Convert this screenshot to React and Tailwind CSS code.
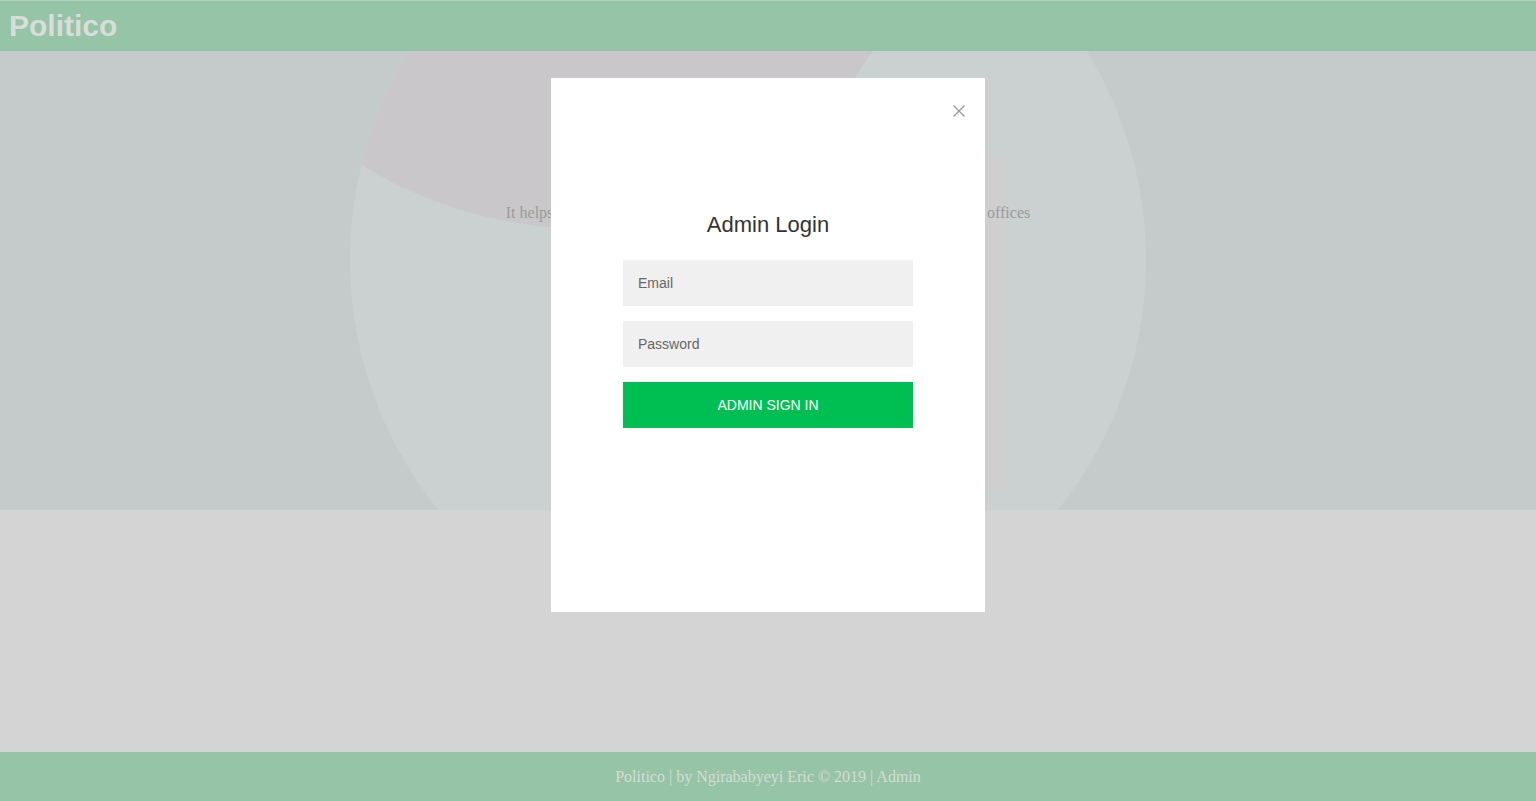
import React from "react";

export default function App() {
  return (
    <div className="relative h-[801px] w-full overflow-hidden bg-[#d4d4d4]">
      <div className="flex h-[801px] flex-col">
        <header className="flex h-[51px] items-center border-t border-[#b4cfbd] bg-[#95c4a6] px-[9px]">
          <h1 className="font-['Liberation_Sans',Arial,sans-serif] text-[30px] font-bold leading-none text-[#d9ddd9]">Politico</h1>
        </header>
        <section className="relative h-[459px] overflow-hidden bg-[#c5cbcb]">
          <svg className="absolute inset-0" width="1536" height="459" viewBox="0 51 1536 459">
            <defs>
              <clipPath id="circ">
                <circle cx="748" cy="260" r="398" />
              </clipPath>
            </defs>
            <circle cx="748" cy="260" r="398" fill="#cbd0d1" />
            <g clipPath="url(#circ)">
              <path d="M340 40 L880 40 L840 100 Q700 230 560 228 Q450 220 362 165 Z" fill="#c9c7ca" />
            </g>
            <rect x="560" y="155" width="446" height="335" fill="#d0cfd0" />
          </svg>
          <p className="absolute left-0 right-0 top-[150px] text-center font-['Liberation_Serif','Times_New_Roman',serif] text-[16px] text-[#999b9c]">
            It helps citizens to vote for the politicians who are running for government offices
          </p>
        </section>
        <div className="flex-1" />
        <footer className="flex h-[49px] items-center justify-center bg-[#95c4a6]">
          <p className="font-['Liberation_Serif','Times_New_Roman',serif] text-[16px] text-[#d5ddd6]">
            Politico | by Ngirababyeyi Eric © 2019 | Admin
          </p>
        </footer>
      </div>

      <div className="absolute inset-0 flex justify-center pt-[78px]">
        <div className="flex h-[534px] w-[434px] flex-col items-center bg-white font-['Liberation_Sans',Arial,sans-serif]">
          <div className="flex w-full justify-end pr-[20px] pt-[27px]">
            <svg width="12" height="12" viewBox="0 0 12 12">
              <path d="M0.5 0.5 L11.5 11.5 M11.5 0.5 L0.5 11.5" stroke="#999" strokeWidth="1.3" fill="none" />
            </svg>
          </div>
          <h2 className="mt-[95px] text-[22px] leading-[26px] text-[#333]">Admin Login</h2>
          <form className="mt-[22px] flex w-[290px] flex-col gap-[15px]">
            <input
              className="h-[46px] w-full bg-[#f0f0f0] px-[15px] text-[14px] text-[#333] outline-none placeholder:text-[#666]"
              placeholder="Email"
            />
            <input
              type="password"
              className="h-[46px] w-full bg-[#f0f0f0] px-[15px] text-[14px] text-[#333] outline-none placeholder:text-[#666]"
              placeholder="Password"
            />
            <button type="button" className="h-[46px] w-full bg-[#00bf52] text-[14px] text-white">
              ADMIN SIGN IN
            </button>
          </form>
        </div>
      </div>
    </div>
  );
}
